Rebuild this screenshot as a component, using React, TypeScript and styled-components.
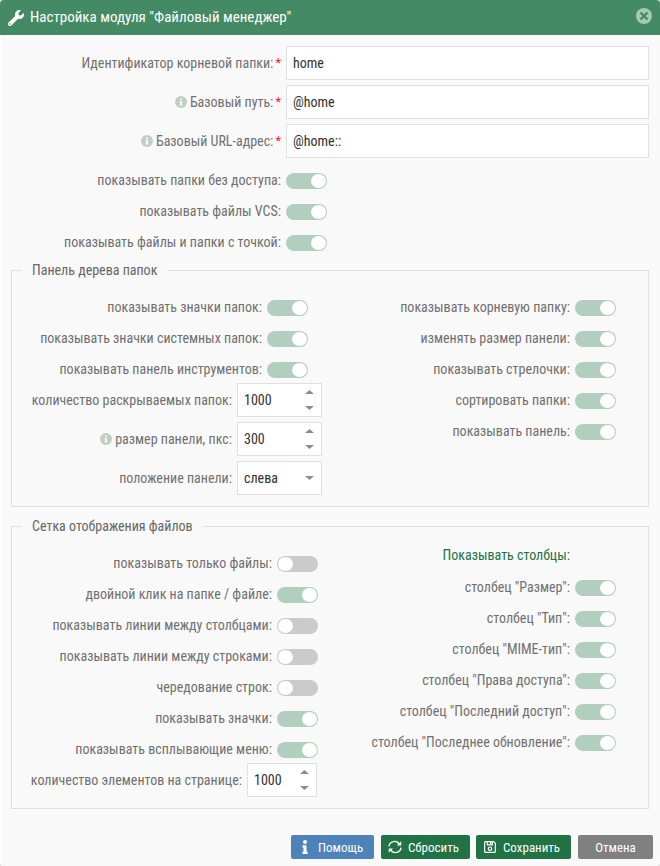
import React from "react";
import styled, { createGlobalStyle } from "styled-components";
import { FaInfo, FaWrench } from "react-icons/fa";

const GlobalStyle = createGlobalStyle`
  * { box-sizing: border-box; }
  body { margin: 0; background: #ddd; overflow: hidden; }
  button, input { font: inherit; }
`;

const Window = styled.main`
  width: 660px;
  height: 866px;
  display: flex;
  flex-direction: column;
  overflow: hidden;
  border-radius: 4px;
  background: #f9f9f9;
  box-shadow: inset 1px 0 #fff;
  font-family: "Roboto Condensed", Roboto, sans-serif;
  font-stretch: 75%;
  font-size: 14px;
  line-height: 18px;
  color: #666;
`;

const Header = styled.header`
  height: 35px;
  flex: none;
  display: flex;
  align-items: center;
  padding: 0 8px;
  background: #448a64;
  color: #fff;
`;

const Title = styled.h1`
  flex: 1;
  margin: 0 0 1px 6px;
  font-size: 15px;
  font-weight: 400;
  line-height: 20px;
`;

const IconButton = styled.button`
  display: flex;
  padding: 0;
  margin: -3px 0 0;
  border: 0;
  background: none;
`;

const Body = styled.form`
  flex: 1;
  padding: 11px 11px 0 11px;
`;

const Stack = styled.div<{ $labelEnd: number; $top?: number }>`
  --label: ${(p) => p.$labelEnd}px;
  display: flex;
  flex-direction: column;
  gap: 5px;
  margin-top: ${(p) => p.$top ?? 0}px;
`;

const Row = styled.div<{ $tall?: boolean }>`
  display: grid;
  grid-template-columns: var(--label) 1fr;
  column-gap: 5px;
  align-items: center;
  height: ${(p) => (p.$tall ? 34 : 26)}px;
`;

const Label = styled.label<{ $accent?: boolean; $lift?: number }>`
  display: flex;
  justify-content: flex-end;
  align-items: center;
  white-space: nowrap;
  padding-bottom: ${(p) => p.$lift ?? 1}px;
  color: ${(p) => (p.$accent ? "#217346" : "#707070")};
`;

const Required = styled.span`
  margin-left: 2px;
  font-size: 13px;
  color: #f22;
`;

const Info = styled.svg`
  margin: 1px 3px 0 0;
  flex: none;
`;

const Track = styled.span<{ $on: boolean }>`
  display: flex;
  justify-content: ${(p) => (p.$on ? "flex-end" : "flex-start")};
  width: 41px;
  height: 16px;
  padding: 1px;
  border-radius: 8px;
  background: ${(p) => (p.$on ? "#b2cebf" : "#cbcbcb")};
`;

const Knob = styled.span`
  width: 15px;
  height: 14px;
  border-radius: 50%;
  background: #fff;
`;

const Box = styled.div<{ $width?: number }>`
  display: flex;
  align-items: center;
  width: ${(p) => (p.$width ? p.$width + "px" : "100%")};
  height: 34px;
  padding: 0 6px;
  border: 1px solid #e0e0e0;
  background: #fff;
  color: #303030;
`;

const Value = styled.span`
  flex: 1;
  padding-bottom: 1px;
`;

const Arrows = styled.span`
  display: flex;
  flex-direction: column;
  gap: 12px;
  padding-right: 1px;
`;

const Triangle = styled.svg`
  display: block;
  width: 9px;
  height: 4px;
  fill: #8c8c8c;
`;

const Group = styled.fieldset<{ $height: number; $top?: number }>`
  height: ${(p) => p.$height}px;
  margin: ${(p) => p.$top ?? 0}px 0 0;
  padding: 0;
  border: 1px solid #e0e0e0;
  min-width: 0;
`;

const Legend = styled.legend`
  margin-left: 10px;
  padding: 0 10px;
  height: 19px;
  line-height: 19px;
`;

const Columns = styled.div`
  display: grid;
  grid-template-columns: 318px 318px;
`;

const Footer = styled.footer`
  display: flex;
  justify-content: flex-end;
  gap: 7px;
  padding: 0 7px 7px;
`;

const Action = styled.button<{ $width: number; $color: string; $inset?: number; $overlap?: number }>`
  display: flex;
  align-items: center;
  justify-content: ${(p) => (p.$inset ? "flex-start" : "center")};
  width: ${(p) => p.$width}px;
  height: 24px;
  margin-right: ${(p) => -(p.$overlap ?? 0)}px;
  padding: 0 0 0 ${(p) => p.$inset ?? 0}px;
  border: 0;
  border-radius: 2px;
  background: ${(p) => p.$color};
  color: #fff;
  font-size: 13px;
  white-space: nowrap;
`;

const ActionIcon = styled.span<{ $width: number }>`
  display: flex;
  flex: none;
  width: ${(p) => p.$width}px;
`;

const ActionText = styled.span`
  padding-top: 1px;
`;

const InfoMark = () => (
  <Info width="12" height="12" viewBox="0 0 12 12">
    <circle cx="6" cy="6" r="6" fill="#bfcfc6" />
    <path d="M5 2.5h2v1.6H5zM4.5 5H7v3.5h.6v1h-3.2v-1H5V6h-.5z" fill="#f9f9f9" />
  </Info>
);

const Up = () => <Triangle viewBox="0 0 9 4"><path d="M0 4 4.5 0 9 4z" /></Triangle>;
const Down = () => <Triangle viewBox="0 0 9 4"><path d="M0 0 4.5 4 9 0z" /></Triangle>;

const ToggleRow = ({ label, on = true }: { label: string; on?: boolean }) => (
  <Row>
    <Label $lift={2}>{label}</Label>
    <Track $on={on} role="switch" aria-checked={on}><Knob /></Track>
  </Row>
);

type FieldProps = { label: string; value: string; info?: boolean; required?: boolean; width?: number; kind?: "spin" | "select" };

const FieldRow = ({ label, value, info, required, width, kind }: FieldProps) => (
  <Row $tall>
    <Label>
      {info && <InfoMark />}
      {label}
      {required && <Required>*</Required>}
    </Label>
    <Box $width={width}>
      <Value>{value}</Value>
      {kind === "spin" && <Arrows><Up /><Down /></Arrows>}
      {kind === "select" && <Arrows><Down /></Arrows>}
    </Box>
  </Row>
);

export default function App() {
  return (
    <>
      <GlobalStyle />
      <Window>
        <Header>
          <FaWrench size={16} />
          <Title>Настройка модуля "Файловый менеджер"</Title>
          <IconButton aria-label="Закрыть">
            <svg width="16" height="16" viewBox="0 0 16 16">
              <circle cx="8" cy="8" r="8" fill="#a6c8b5" />
              <path d="m4.5 4.5 7 7m0-7-7 7" stroke="#448a64" strokeWidth="2.2" />
            </svg>
          </IconButton>
        </Header>
        <Body>
          <Stack $labelEnd={270}>
            <FieldRow label="Идентификатор корневой папки:" value="home" required />
            <FieldRow label="Базовый путь:" value="@home" info required />
            <FieldRow label="Базовый URL-адрес:" value="@home::" info required />
          </Stack>
          <Stack $labelEnd={270} $top={10}>
            <ToggleRow label="показывать папки без доступа:" />
            <ToggleRow label="показывать файлы VCS:" />
            <ToggleRow label="показывать файлы и папки с точкой:" />
          </Stack>
          <Group $height={246} $top={5}>
            <Legend>Панель дерева папок</Legend>
            <Columns>
              <div>
                <Stack $labelEnd={250} $top={15}>
                  <ToggleRow label="показывать значки папок:" />
                  <ToggleRow label="показывать значки системных папок:" />
                  <ToggleRow label="показывать панель инструментов:" />
                </Stack>
                <Stack $labelEnd={220}>
                  <FieldRow label="количество раскрываемых папок:" value="1000" width={85} kind="spin" />
                  <FieldRow label="размер панели, пкс:" value="300" info width={85} kind="spin" />
                  <FieldRow label="положение панели:" value="слева" width={85} kind="select" />
                </Stack>
              </div>
              <Stack $labelEnd={240} $top={15}>
                <ToggleRow label="показывать корневую папку:" />
                <ToggleRow label="изменять размер панели:" />
                <ToggleRow label="показывать стрелочки:" />
                <ToggleRow label="сортировать папки:" />
                <ToggleRow label="показывать панель:" />
              </Stack>
            </Columns>
          </Group>
          <Group $height={292} $top={10}>
            <Legend>Сетка отображения файлов</Legend>
            <Columns>
              <div>
                <Stack $labelEnd={260} $top={15}>
                  <ToggleRow label="показывать только файлы:" on={false} />
                  <ToggleRow label="двойной клик на папке / файле:" />
                  <ToggleRow label="показывать линии между столбцами:" on={false} />
                  <ToggleRow label="показывать линии между строками:" on={false} />
                  <ToggleRow label="чередование строк:" on={false} />
                  <ToggleRow label="показывать значки:" />
                  <ToggleRow label="показывать всплывающие меню:" />
                </Stack>
                <Stack $labelEnd={230}>
                  <FieldRow label="количество элементов на странице:" value="1000" width={70} kind="spin" />
                </Stack>
              </div>
              <Stack $labelEnd={240} $top={8}>
                <Row><Label $accent $lift={4}>Показывать столбцы:</Label></Row>
                <ToggleRow label={'столбец "Размер":'} />
                <ToggleRow label={'столбец "Тип":'} />
                <ToggleRow label={'столбец "MIME-тип":'} />
                <ToggleRow label={'столбец "Права доступа":'} />
                <ToggleRow label={'столбец "Последний доступ":'} />
                <ToggleRow label={'столбец "Последнее обновление":'} />
              </Stack>
            </Columns>
          </Group>
        </Body>
        <Footer>
          <Action $width={83} $color="#4d82ba" $inset={7}><ActionIcon $width={20}><FaInfo size={14} /></ActionIcon><ActionText>Помощь</ActionText></Action>
          <Action $width={89} $color="#217346" $inset={7} $overlap={1}>
            <ActionIcon $width={20}>
              <svg width="14" height="14" viewBox="0 0 15 14" fill="none" stroke="#fff" strokeWidth="1.4">
                <path d="M1 6.3A6 6 0 0 1 12.2 4.2M14 7.7A6 6 0 0 1 2.8 9.8" />
                <path d="M14.2.8v4.6H9.6zM.8 13.2V8.6h4.6z" fill="#fff" stroke="none" />
              </svg>
            </ActionIcon>
            <ActionText>Сбросить</ActionText>
          </Action>
          <Action $width={95} $color="#217346" $inset={8}>
            <ActionIcon $width={19}>
              <svg width="12" height="12" viewBox="0 0 12 12" fill="none" stroke="#fff" strokeWidth="1.2">
                <path d="M1.6.6h8l1.8 1.8v8a1 1 0 0 1-1 1H1.6a1 1 0 0 1-1-1V1.6a1 1 0 0 1 1-1zM3.3.8v3h5v-3M6.6 1v2" />
                <circle cx="6" cy="7.7" r="1.7" />
              </svg>
            </ActionIcon>
            <ActionText>Сохранить</ActionText>
          </Action>
          <Action $width={75} $color="#808080"><ActionText>Отмена</ActionText></Action>
        </Footer>
      </Window>
    </>
  );
}
